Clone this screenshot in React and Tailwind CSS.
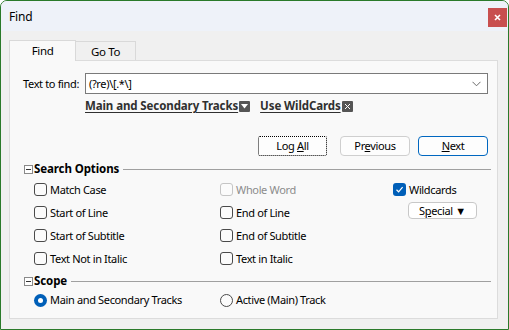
import React from "react";

function Check({ checked, disabled }) {
  if (checked) {
    return (
      <span className="w-[13px] h-[13px] rounded-[3px] bg-[#005fb8] flex items-center justify-center shrink-0">
        <svg width="9" height="9" viewBox="0 0 9 9"><path d="M1.5 4.8 L3.6 6.8 L7.6 2.2" fill="none" stroke="white" strokeWidth="1.2" /></svg>
      </span>
    );
  }
  return (
    <span className={disabled ? "w-[13px] h-[13px] rounded-[3px] border bg-[#fbfbfb] shrink-0 border-[#c5c5c5]" : "w-[13px] h-[13px] rounded-[3px] border bg-[#fbfbfb] shrink-0 border-[#4a4a4a]"} />
  );
}

function Radio({ checked }) {
  if (checked) {
    return (
      <span className="w-[13px] h-[13px] rounded-full bg-[#005fb8] flex items-center justify-center shrink-0">
        <span className="w-[5px] h-[5px] rounded-full bg-white" />
      </span>
    );
  }
  return <span className="w-[13px] h-[13px] rounded-full border border-[#4a4a4a] bg-[#fbfbfb] shrink-0" />;
}

function Item({ label, checked, disabled, w }) {
  return (
    <div className={"flex items-center gap-[3px] " + w}>
      <Check checked={checked} disabled={disabled} />
      <span className={disabled ? "text-[#8c8c8c]" : "text-black"}>{label}</span>
    </div>
  );
}

function Header({ title }) {
  return (
    <div className="flex items-center h-[16px] pl-[14px] pr-[6px]">
      <span className="w-[9px] h-[9px] border border-[#8a8a8a] bg-white flex items-center justify-center shrink-0">
        <span className="w-[5px] h-[1px] bg-[#333]" />
      </span>
      <span className="font-bold ml-[1px] text-[11.5px] tracking-[-0.1px]">{title}</span>
      <span className="flex-1 h-[1px] bg-[#a0a0a0] ml-[4px]" />
    </div>
  );
}

export default function App() {
  return (
    <div className="w-[509px] h-[330px] border border-[#2a7a2a] rounded-t-[7px] bg-[#f0f0f0] flex flex-col overflow-hidden text-[11px] tracking-[-0.35px] leading-[16px] text-black whitespace-nowrap font-['Noto_Sans',sans-serif]">
      <div className="h-[30px] bg-[#eef2f9] flex items-start justify-between pl-[8px] pr-[1px] shrink-0">
        <span className="mt-[8px] text-[12px] tracking-[-0.2px]">Find</span>
        <div className="mt-[7px] w-[19px] h-[19px] bg-[#c84f4f] flex items-center justify-center">
          <svg width="7" height="7" viewBox="0 0 7 7"><path d="M1 1 L6 6 M6 1 L1 6" stroke="white" strokeWidth="1.6" /></svg>
        </div>
      </div>
      <div className="flex-1 flex flex-col pl-[8px] pr-[10px] pt-[8px] pb-[10px]">
        <div className="flex items-end h-[21px]">
          <div className="w-[67px] h-[21px] bg-[#f9f9f9] border border-b-0 border-[#d9d9d9] flex items-center justify-center relative z-10 -mb-[1px] text-[11.5px]">
            Find
          </div>
          <div className="w-[60px] h-[19px] bg-[#f0f0f0] border border-l-0 border-b-0 border-[#d9d9d9] flex items-center justify-center pt-[2px] text-[11.5px]">
            Go To
          </div>
        </div>
        <div className="flex-1 bg-[#f9f9f9] border border-[#dcdcdc] flex flex-col">
          <div className="flex items-center mt-[12px] pl-[13px] h-[21px]">
            <span className="w-[62px]">Text to find:</span>
            <div className="w-[403px] h-[21px] border border-[#7a7a7a] bg-white flex items-center justify-between pl-[3px] pr-[6px]">
              <span>(?re)\[.*\]</span>
              <svg width="9" height="6" viewBox="0 0 9 6"><path d="M0.5 0.8 L4.5 4.8 L8.5 0.8" fill="none" stroke="#6b6b6b" strokeWidth="1" /></svg>
            </div>
          </div>
          <div className="flex items-center mt-[3px] pl-[75px] h-[18px] font-bold text-[#303030] text-[11.5px] tracking-[-0.1px]">
            <span className="underline underline-offset-[2px]">Main and Secondary Tracks</span>
            <span className="w-[11px] h-[11px] bg-[#555] rounded-[1px] flex items-center justify-center ml-[1px]">
              <svg width="7" height="5" viewBox="0 0 7 5"><path d="M0 0 L7 0 L3.5 4.5 Z" fill="white" /></svg>
            </span>
            <span className="underline underline-offset-[2px] ml-[10px]">Use WildCards</span>
            <span className="w-[11px] h-[11px] bg-[#555] rounded-[1px] flex items-center justify-center ml-[1px]">
              <svg width="7" height="7" viewBox="0 0 7 7"><path d="M1 1 L6 6 M6 1 L1 6" stroke="white" strokeWidth="1" /></svg>
            </span>
          </div>
          <div className="flex items-center mt-[21px] pl-[248px] h-[20px] gap-[13px]">
            <div className="w-[69px] h-[20px] border border-dotted border-black rounded-[2px] bg-[#fdfdfd] flex items-center justify-center">
              <span>Log <span className="underline">A</span>ll</span>
            </div>
            <div className="flex gap-[8px]">
              <div className="w-[70px] h-[20px] border border-[#cfcfcf] rounded-[4px] bg-[#fdfdfd] flex items-center justify-center">
                <span>Pr<span className="underline">e</span>vious</span>
              </div>
              <div className="w-[70px] h-[20px] border border-[#0067c0] rounded-[4px] bg-[#fdfdfd] flex items-center justify-center">
                <span><span className="underline">N</span>ext</span>
              </div>
            </div>
          </div>
          <div className="mt-[5px]">
            <Header title="Search Options" />
          </div>
          <div className="flex flex-col pl-[24px] mt-[1px]">
            <div className="flex items-center h-[23px]">
              <Item label="Match Case" w="w-[186px]" />
              <Item label="Whole Word" disabled w="w-[173px]" />
              <Item label="Wildcards" checked w="" />
            </div>
            <div className="flex items-center h-[23px]">
              <Item label="Start of Line" w="w-[186px]" />
              <Item label="End of Line" w="w-[188px]" />
              <div className="w-[69px] h-[17px] -mt-[4px] border border-[#c8c8c8] rounded-[4px] bg-white flex items-center justify-center">
                <span>S<span className="underline">p</span>ecial ▼</span>
              </div>
            </div>
            <div className="flex items-center h-[23px]">
              <Item label="Start of Subtitle" w="w-[186px]" />
              <Item label="End of Subtitle" w="w-[173px]" />
            </div>
            <div className="flex items-center h-[23px]">
              <Item label="Text Not in Italic" w="w-[186px]" />
              <Item label="Text in Italic" w="w-[173px]" />
            </div>
          </div>
          <div className="mt-[3px]">
            <Header title="Scope" />
          </div>
          <div className="flex items-center pl-[24px] mt-[1px] h-[20px]">
            <div className="flex items-center gap-[3px] w-[186px]">
              <Radio checked />
              <span>Main and Secondary Tracks</span>
            </div>
            <div className="flex items-center gap-[3px]">
              <Radio />
              <span>Active (Main) Track</span>
            </div>
          </div>
        </div>
      </div>
    </div>
  );
}
